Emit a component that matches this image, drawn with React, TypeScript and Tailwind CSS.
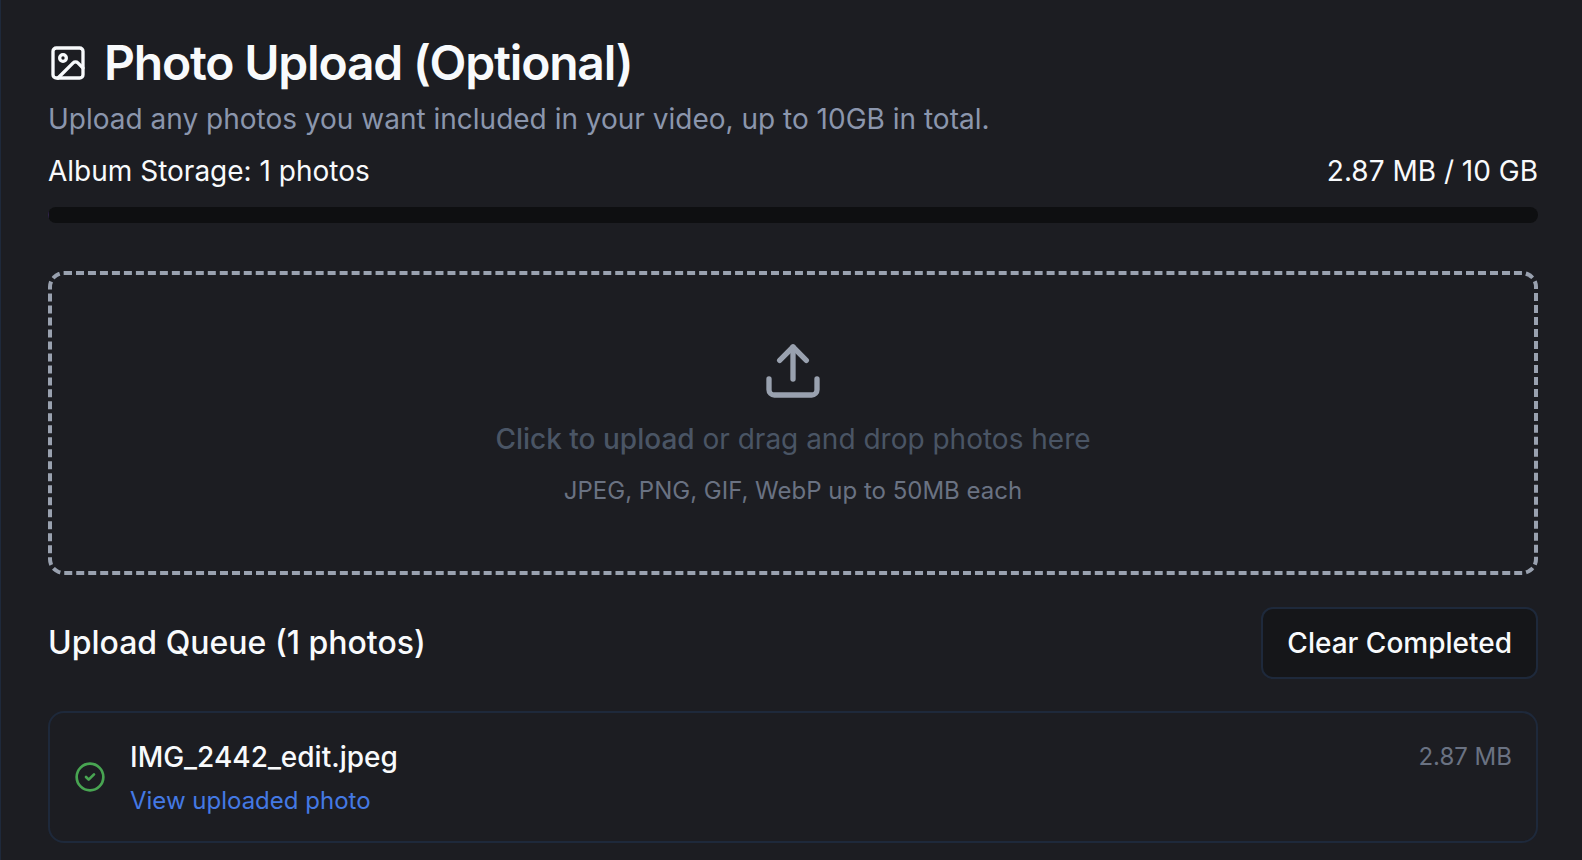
import { useState } from "react";
import { CircleCheck, Image, Upload } from "lucide-react";

type QueuedPhoto = { name: string; size: string };

const photos: QueuedPhoto[] = [{ name: "IMG_2442_edit.jpeg", size: "2.87 MB" }];

function StorageMeter() {
  return (
    <div className="flex flex-col gap-4">
      <div className="flex items-center justify-between text-[28px] leading-10">
        <span>Album Storage: 1 photos</span>
        <span>2.87 MB / 10 GB</span>
      </div>
      <div
        role="progressbar"
        aria-label="Album storage"
        aria-valuenow={0}
        aria-valuemin={0}
        aria-valuemax={100}
        className="h-4 overflow-hidden rounded-full bg-[#0e0f11]"
      >
        <div className="h-full w-px bg-[#30244a]" />
      </div>
    </div>
  );
}

function DropZone() {
  return (
    <label className="mt-12 flex cursor-pointer flex-col items-center gap-4 rounded-2xl border-4 border-dashed border-gray-400 p-16 text-center">
      <input type="file" accept="image/*" multiple className="sr-only" />
      <Upload className="size-16 text-gray-400" />
      <span className="text-[28px] leading-10 text-gray-600">
        <span className="font-medium">Click to upload</span> or drag and drop photos here
      </span>
      <span className="text-2xl leading-8 text-gray-500">JPEG, PNG, GIF, WebP up to 50MB each</span>
    </label>
  );
}

function QueueItem({ photo }: { photo: QueuedPhoto }) {
  return (
    <li className="flex items-center gap-6 rounded-2xl border-2 border-[#1e293b] p-6">
      <CircleCheck className="size-8 shrink-0 text-[#48a552]" />
      <div className="flex min-w-0 grow flex-col gap-2">
        <div className="flex items-center justify-between">
          <span className="truncate text-[28px] leading-10 font-medium">{photo.name}</span>
          <span className="text-2xl leading-8 text-gray-500">{photo.size}</span>
        </div>
        <a href="#photo" className="self-start text-2xl leading-8 text-[#4479e4]">
          View uploaded photo
        </a>
      </div>
    </li>
  );
}

export default function App() {
  const [queue, setQueue] = useState(photos);

  return (
    <main className="min-h-screen border-l border-[#1e293b] bg-[#1c1d22] pt-[39px] pr-11 pb-4 pl-[47px] font-['Inter',sans-serif] text-[#f8fafc]">
      <header className="mb-3 flex flex-col gap-3">
        <h1 className="flex items-center gap-4 text-5xl leading-none font-semibold tracking-tight">
          <Image className="size-10 shrink-0" />
          Photo Upload (Optional)
        </h1>
        <p className="text-[28px] leading-10 text-[#8b96ad]">
          Upload any photos you want included in your video, up to 10GB in total.
        </p>
      </header>
      <StorageMeter />
      <DropZone />
      <section className="mt-8 flex flex-col gap-8">
        <div className="flex items-center justify-between">
          <h2 className="text-[32px] leading-12 font-medium">Upload Queue ({queue.length} photos)</h2>
          <button
            type="button"
            onClick={() => setQueue([])}
            className="h-18 rounded-xl border-2 border-[#1e293b] bg-[#151619] px-6 text-[28px] leading-10 font-medium"
          >
            Clear Completed
          </button>
        </div>
        <ul className="flex flex-col gap-4">
          {queue.map((photo) => (
            <QueueItem key={photo.name} photo={photo} />
          ))}
        </ul>
      </section>
    </main>
  );
}
